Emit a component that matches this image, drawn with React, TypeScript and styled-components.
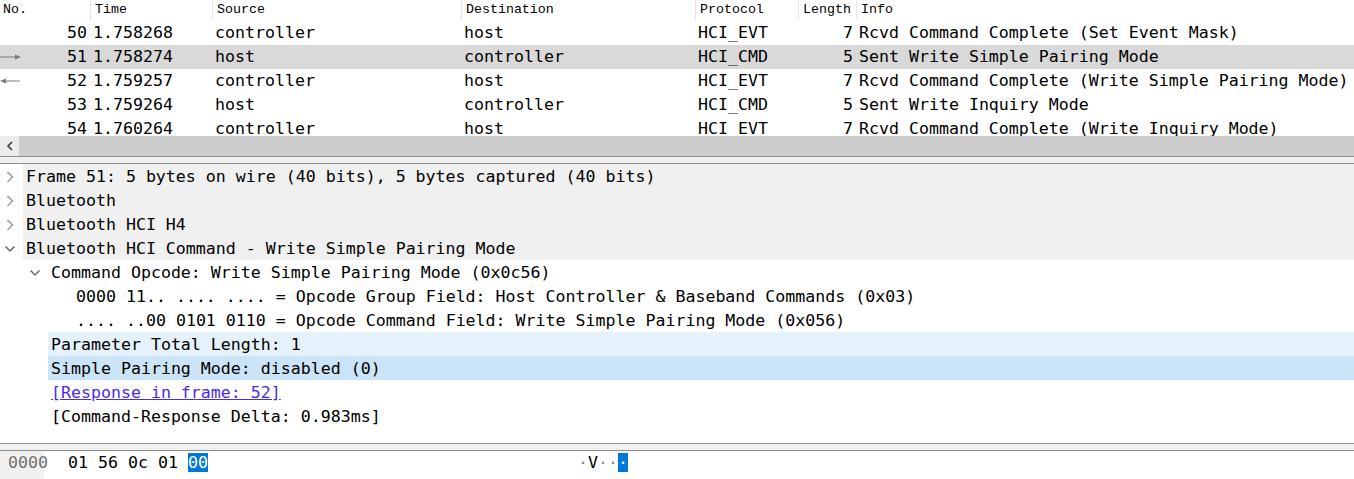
import React from 'react';
import styled, { createGlobalStyle } from 'styled-components';

const GlobalStyle = createGlobalStyle`
  html, body {
    margin: 0;
    padding: 0;
    background: #ffffff;
    overflow: hidden;
  }
  body {
    font-family: "DejaVu Sans Mono", "Liberation Mono", monospace;
    color: #000;
  }
`;

const Page = styled.div`
  width: 1354px;
  height: 479px;
  display: flex;
  flex-direction: column;
  overflow: hidden;
`;

const COLS = '90px 122px 249px 234px 103px 58px 1fr';

// ---- packet list ----

const PacketList = styled.div`
  height: 156px;
  display: flex;
  flex-direction: column;
`;

const HeaderRow = styled.div`
  display: grid;
  grid-template-columns: ${COLS};
  height: 21px;
  font-family: "Liberation Mono", monospace;
  font-size: 13.3px;
  line-height: 19px;
`;

const HeaderCell = styled.div<{ $first?: boolean }>`
  padding-left: ${(p) => (p.$first ? '3px' : '4px')};
  border-left: ${(p) => (p.$first ? 'none' : '1px solid #e5e5e5')};
  height: 20px;
  white-space: nowrap;
  overflow: hidden;
`;

const Rows = styled.div`
  flex: 1;
  overflow: hidden;
`;

const Row = styled.div<{ $selected?: boolean }>`
  display: grid;
  grid-template-columns: ${COLS};
  height: 24px;
  line-height: 24px;
  font-size: 16.6px;
  background: ${(p) => (p.$selected ? '#d9d9d9' : 'transparent')};
  white-space: nowrap;
`;

const Cell = styled.div<{ $right?: boolean }>`
  padding: 0 3px;
  text-align: ${(p) => (p.$right ? 'right' : 'left')};
  overflow: hidden;
`;

const NoCell = styled.div`
  display: flex;
  align-items: center;
  justify-content: space-between;
  padding-right: 3px;
`;

const Info = styled.div`
  padding-left: 3px;
  overflow: visible;
`;

const HScroll = styled.div`
  height: 20px;
  display: flex;
  background: #cdcdcd;
`;

const ScrollButton = styled.div`
  width: 19px;
  background: #ececec;
  display: flex;
  align-items: center;
  justify-content: center;
`;

const Splitter = styled.div`
  height: 6px;
  background: #f0f0f0;
  border-top: 1px solid #8f8f8f;
  border-bottom: 1px solid #8f8f8f;
  flex-shrink: 0;
`;

// ---- details tree ----

const Details = styled.div`
  height: 279px;
  font-size: 16.6px;
  overflow: hidden;
`;

const TreeRow = styled.div`
  display: flex;
  height: 24px;
  line-height: 26px;
  white-space: nowrap;
`;

const Indent = styled.div<{ $level: number }>`
  width: ${(p) => p.$level * 25}px;
  flex-shrink: 0;
`;

const Toggle = styled.div`
  width: 23px;
  flex-shrink: 0;
  display: flex;
  align-items: center;
  justify-content: center;
  padding-right: 4px;
  padding-top: 1px;
  box-sizing: border-box;
`;

const Label = styled.div<{ $tone?: 'top' | 'hover' | 'selected' }>`
  flex: 1;
  padding-left: 3px;
  background: ${(p) =>
    p.$tone === 'top'
      ? '#f0f0f0'
      : p.$tone === 'hover'
      ? '#e5f1fb'
      : p.$tone === 'selected'
      ? '#cce4f7'
      : 'transparent'};
`;

const LinkText = styled.span`
  color: #4a2ce6;
  text-decoration: underline;
`;

// ---- bytes pane ----

const Bytes = styled.div`
  flex: 1;
  display: grid;
  grid-template-columns: 44px 534px 1fr;
  font-size: 16.6px;
  line-height: 24px;
`;

const Offset = styled.div`
  background: #f0f0f0;
  color: #707070;
  padding-left: 8px;
`;

const HexCol = styled.div`
  padding-left: 24px;
  white-space: pre;
`;

const Byte = styled.span<{ $sel?: boolean }>`
  background: ${(p) => (p.$sel ? '#0078d7' : 'transparent')};
  color: ${(p) => (p.$sel ? '#ffffff' : '#000')};
`;

const AsciiCol = styled.div`
  white-space: pre;
`;

const Dot = styled.span<{ $sel?: boolean }>`
  color: ${(p) => (p.$sel ? '#ffffff' : '#8a8a8a')};
  background: ${(p) => (p.$sel ? '#0078d7' : 'transparent')};
`;

const Chevron: React.FC<{ open?: boolean }> = ({ open }) => (
  <svg width="12" height="12" viewBox="0 0 12 12">
    {open ? (
      <polyline points="1.5,3.5 6,8 10.5,3.5" fill="none" stroke="#6a6a6a" strokeWidth="1.5" />
    ) : (
      <polyline points="3.5,1 8.5,6 3.5,11" fill="none" stroke="#999" strokeWidth="1.5" />
    )}
  </svg>
);

const Arrow: React.FC<{ dir: 'in' | 'out' }> = ({ dir }) => (
  <svg width="22" height="8" viewBox="0 0 22 8">
    {dir === 'out' ? (
      <>
        <line x1="0" y1="4" x2="17" y2="4" stroke="#7a7a7a" strokeWidth="1" />
        <polygon points="15,1.5 21,4 15,6.5" fill="#7a7a7a" />
      </>
    ) : (
      <>
        <line x1="3" y1="4" x2="20" y2="4" stroke="#7a7a7a" strokeWidth="1" />
        <polygon points="6,1.5 0,4 6,6.5" fill="#7a7a7a" />
      </>
    )}
  </svg>
);

interface Packet {
  no: number;
  time: string;
  src: string;
  dst: string;
  proto: string;
  len: number;
  info: string;
  arrow?: 'in' | 'out';
}

const packets: Packet[] = [
  { no: 50, time: '1.758268', src: 'controller', dst: 'host', proto: 'HCI_EVT', len: 7, info: 'Rcvd Command Complete (Set Event Mask)' },
  { no: 51, time: '1.758274', src: 'host', dst: 'controller', proto: 'HCI_CMD', len: 5, info: 'Sent Write Simple Pairing Mode', arrow: 'out' },
  { no: 52, time: '1.759257', src: 'controller', dst: 'host', proto: 'HCI_EVT', len: 7, info: 'Rcvd Command Complete (Write Simple Pairing Mode)', arrow: 'in' },
  { no: 53, time: '1.759264', src: 'host', dst: 'controller', proto: 'HCI_CMD', len: 5, info: 'Sent Write Inquiry Mode' },
  { no: 54, time: '1.760264', src: 'controller', dst: 'host', proto: 'HCI_EVT', len: 7, info: 'Rcvd Command Complete (Write Inquiry Mode)' },
];

interface Node {
  level: number;
  text: string;
  toggle?: 'open' | 'closed';
  tone?: 'top' | 'hover' | 'selected';
  link?: boolean;
}

const tree: Node[] = [
  { level: 0, toggle: 'closed', tone: 'top', text: 'Frame 51: 5 bytes on wire (40 bits), 5 bytes captured (40 bits)' },
  { level: 0, toggle: 'closed', tone: 'top', text: 'Bluetooth' },
  { level: 0, toggle: 'closed', tone: 'top', text: 'Bluetooth HCI H4' },
  { level: 0, toggle: 'open', tone: 'top', text: 'Bluetooth HCI Command - Write Simple Pairing Mode' },
  { level: 1, toggle: 'open', text: 'Command Opcode: Write Simple Pairing Mode (0x0c56)' },
  { level: 2, text: '0000 11.. .... .... = Opcode Group Field: Host Controller & Baseband Commands (0x03)' },
  { level: 2, text: '.... ..00 0101 0110 = Opcode Command Field: Write Simple Pairing Mode (0x056)' },
  { level: 1, tone: 'hover', text: 'Parameter Total Length: 1' },
  { level: 1, tone: 'selected', text: 'Simple Pairing Mode: disabled (0)' },
  { level: 1, link: true, text: '[Response in frame: 52]' },
  { level: 1, text: '[Command-Response Delta: 0.983ms]' },
];

export default function App() {
  return (
    <Page>
      <GlobalStyle />
      <PacketList>
        <HeaderRow>
          <HeaderCell $first>No.</HeaderCell>
          <HeaderCell>Time</HeaderCell>
          <HeaderCell>Source</HeaderCell>
          <HeaderCell>Destination</HeaderCell>
          <HeaderCell>Protocol</HeaderCell>
          <HeaderCell>Length</HeaderCell>
          <HeaderCell>Info</HeaderCell>
        </HeaderRow>
        <Rows>
          {packets.map((p) => (
            <Row key={p.no} $selected={p.no === 51}>
              <NoCell>
                {p.arrow ? <Arrow dir={p.arrow} /> : <span />}
                <span>{p.no}</span>
              </NoCell>
              <Cell>{p.time}</Cell>
              <Cell>{p.src}</Cell>
              <Cell>{p.dst}</Cell>
              <Cell>{p.proto}</Cell>
              <Cell $right>{p.len}</Cell>
              <Info>{p.info}</Info>
            </Row>
          ))}
        </Rows>
        <HScroll>
          <ScrollButton>
            <svg width="8" height="10" viewBox="0 0 8 10">
              <polyline points="6,1 2,5 6,9" fill="none" stroke="#333" strokeWidth="1.5" />
            </svg>
          </ScrollButton>
        </HScroll>
      </PacketList>
      <Splitter />
      <Details>
        {tree.map((n, i) => (
          <TreeRow key={i}>
            <Indent $level={n.level} />
            <Toggle>{n.toggle && <Chevron open={n.toggle === 'open'} />}</Toggle>
            <Label $tone={n.tone}>{n.link ? <LinkText>{n.text}</LinkText> : n.text}</Label>
          </TreeRow>
        ))}
      </Details>
      <Splitter />
      <Bytes>
        <Offset>0000</Offset>
        <HexCol>
          <Byte>01</Byte> <Byte>56</Byte> <Byte>0c</Byte> <Byte>01</Byte> <Byte $sel>00</Byte>
        </HexCol>
        <AsciiCol>
          <Dot>·</Dot>
          <span>V</span>
          <Dot>·</Dot>
          <Dot>·</Dot>
          <Dot $sel>·</Dot>
        </AsciiCol>
      </Bytes>
    </Page>
  );
}
